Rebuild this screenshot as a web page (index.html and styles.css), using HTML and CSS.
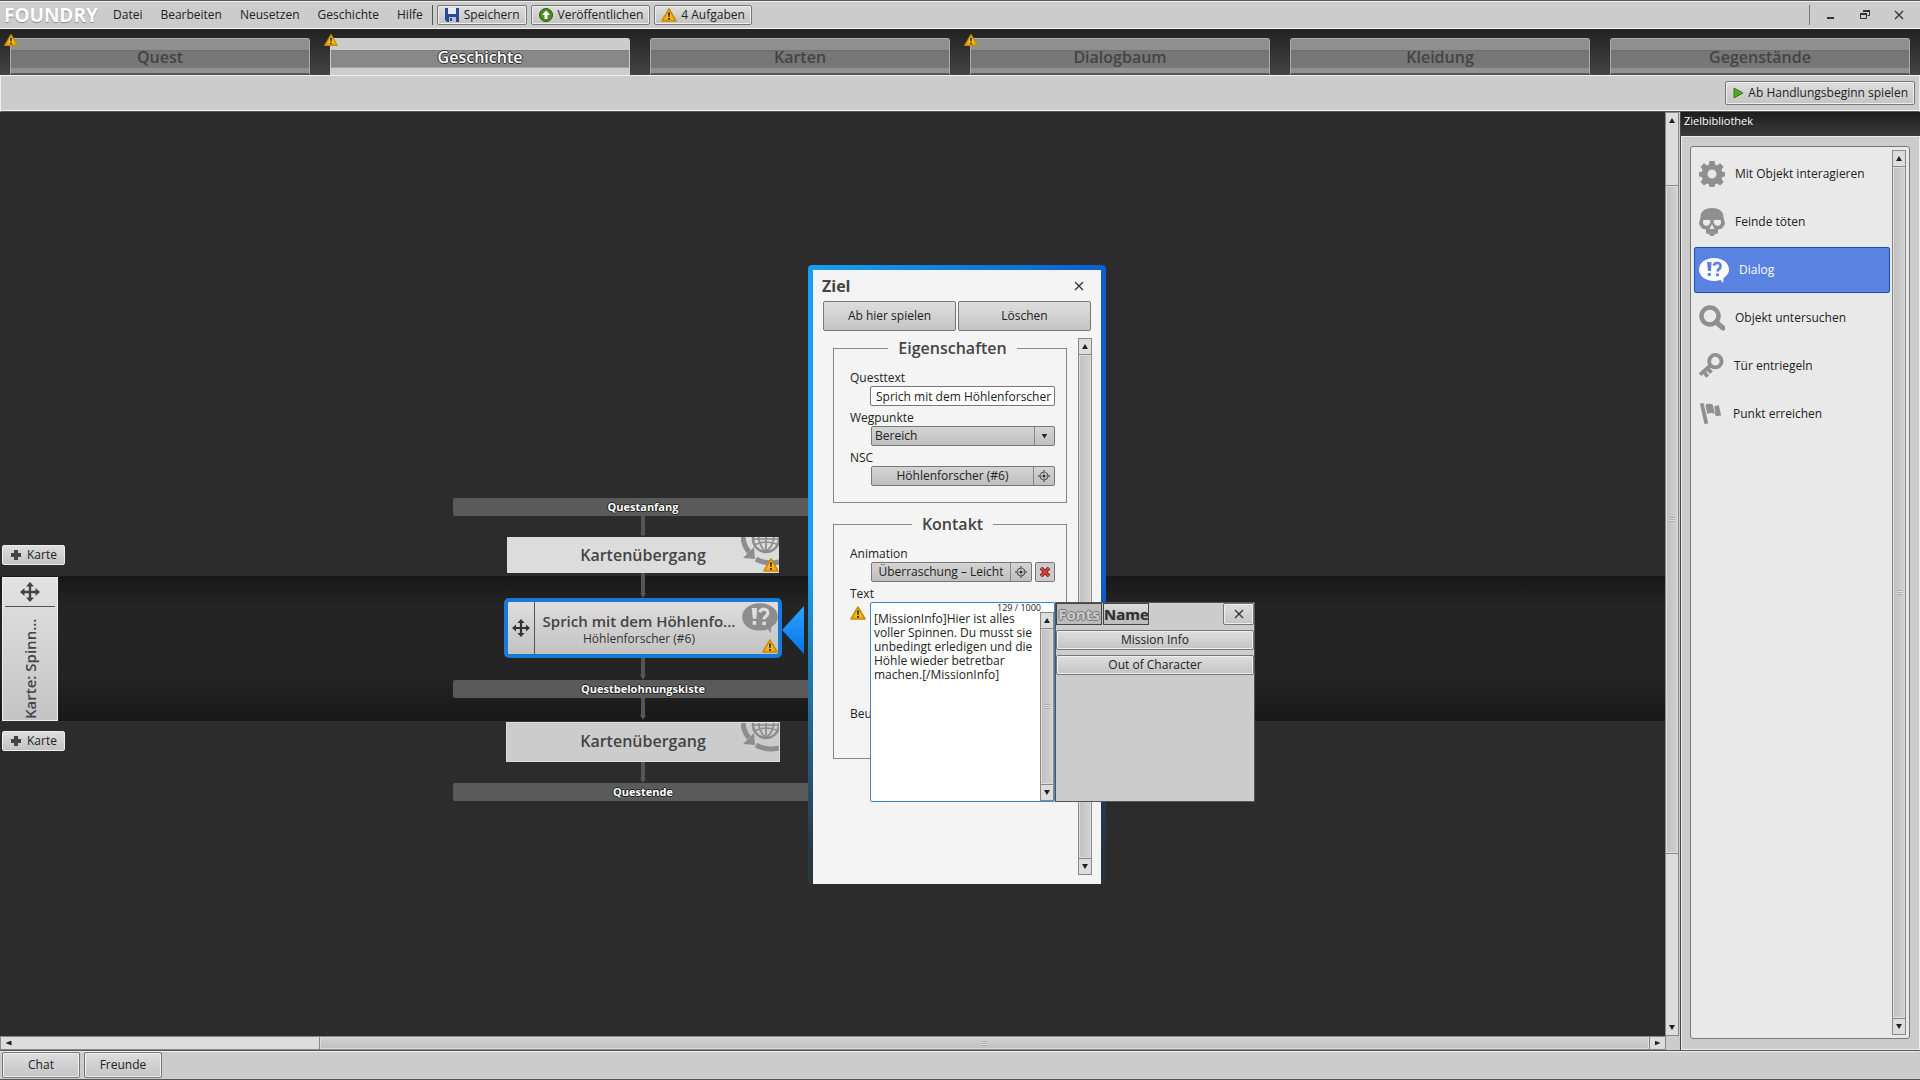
FILE: index.html
```
<!DOCTYPE html>
<html lang="de">
  <head>
    <meta charset="utf-8">
    <meta name="viewport" content="width=device-width,initial-scale=1.0">
    <title>Foundry</title>
    <link rel="stylesheet" href="styles.css">
  </head>
  <body>
    <svg class="sprite" aria-hidden="true">
      <linearGradient id="amber" x1="0" y1="0" x2="0" y2="1">
        <stop offset="0" stop-color="#ffe35a"/>
        <stop offset="1" stop-color="#f5a400"/>
      </linearGradient>
      <symbol id="warn" viewBox="0 0 16 14">
        <path d="M8 1 L15 13 H1 Z" fill="url(#amber)" stroke="#c98a00" stroke-width="1.6" stroke-linejoin="round"/>
        <path d="M7 4.500h2l-.4 4.500h-1.200z M7.100 10h1.800v1.800h-1.800z" fill="#2a1c00"/>
      </symbol>
      <symbol id="move" viewBox="0 0 20 20">
        <path d="M10 0l4 4.500h-2.800v4.300h4.300V6L20 10l-4.500 4v-2.800h-4.300v4.300H14L10 20l-4-4.500h2.800v-4.300H4.500V14L0 10l4.500-4v2.800h4.300V4.500H6z"/>
      </symbol>
      <symbol id="plus" viewBox="0 0 10 10">
        <path d="M3 0h4v3h3v4H7v3H3V7H0V3h3z"/>
      </symbol>
      <symbol id="target" viewBox="0 0 12 12">
        <circle cx="6" cy="6" r="4" fill="none" stroke="#333" stroke-width="1" stroke-dasharray="4.280 2" stroke-dashoffset="-1"/>
        <path d="M6 0v3.500M6 8.500V12M0 6h3.500M8.500 6H12" stroke="#333"/>
        <circle cx="6" cy="6" r="1.500" fill="#333"/>
      </symbol>
      <symbol id="cross" viewBox="0 0 10 10">
        <path d="M1 1l8 8M9 1L1 9" stroke="#333" stroke-width="1.300"/>
      </symbol>
      <symbol id="globe" viewBox="0 0 38 36">
        <g fill="none" stroke="#8d8d8d">
          <circle cx="25" cy="2" r="13" stroke-width="2.500"/>
          <path d="M25-12v27M13 8q12-6 25 0M18-6q-2 12 6 20M32-6q3 12-6 20M12 2h26" stroke-width="1.700"/>
          <path d="M2-2q0 10 6 17" stroke-width="5"/>
          <path d="M15 22q10 6 23 3" stroke-width="5"/>
        </g>
        <path d="M2 21l12 1-1-12z" fill="#8d8d8d"/>
      </symbol>
      <symbol id="dialog" viewBox="0 0 30 26">
        <path d="M15 1C6.500 1 0 6 0 12.500S6.500 24 15 24q3.500 0 6.500-1.200L24 26l.5-5Q30 17.500 30 12.500C30 6 23.500 1 15 1z"/>
        <path d="M8 5h4.500l-.5 9H9zM8.800 16h3v3h-3z" fill="var(--mark)"/>
        <path d="M14.500 8.500q2-3.500 5.200-2.200t1 5.200q-2.200 1.200-2.200 3" fill="none" stroke="var(--mark)" stroke-width="2.600"/>
        <path d="M17 16.500h3v2.700h-3z" fill="var(--mark)"/>
      </symbol>
      <symbol id="gear" viewBox="0 0 26 26">
        <path d="M10.500 0h5l.6 3.600 2 .8 3-2.100 3.500 3.500-2.100 3 .8 1.900 2.700.5v4.200l-2.700.6-.8 2 2.100 3-3.500 3.500-3-2.100-2 .8-.6 2.800h-5l-.6-2.800-1.900-.8-3 2.100L1.500 21l2.100-3-.8-2-2.800-.6v-4.200l2.800-.5.8-1.900-2.100-3L5 2.300l3 2.100 1.900-.8zM13 8.500a4.500 4.500 0 1 0 0 9 4.500 4.500 0 0 0 0-9z" fill-rule="evenodd"/>
      </symbol>
      <symbol id="skull" viewBox="0 0 26 28">
        <path d="M13 0C5 0 1.500 4 1.500 9L0 16l3 4.500 4 1v4l3 .5 1.500 2h3L16 26l3-.5v-4l4-1 3-4.500-1.500-7C24.500 4 21 0 13 0zM4 12.500q4-1.500 7.500 0 0 5-4.500 5.500-3.500-1-3-5.500zm18 0q-4-1.500-7.500 0 0 5 4.500 5.500 3.500-1 3-5.500zM13 16l2.500 5h-5z" fill-rule="evenodd"/>
      </symbol>
      <symbol id="lens" viewBox="0 0 26 26">
        <circle cx="11" cy="11" r="8.500" fill="none" stroke="#8f8f8f" stroke-width="4.500"/>
        <path d="M17 17l7 6" stroke="#8f8f8f" stroke-width="5" stroke-linecap="round"/>
      </symbol>
      <symbol id="key" viewBox="0 0 26 26">
        <circle cx="17" cy="8" r="6.500" fill="none" stroke="#8f8f8f" stroke-width="4"/>
        <path d="M12.500 12L1 22M5 19l4 5M9 16l4 4" fill="none" stroke="#8f8f8f" stroke-width="4"/>
      </symbol>
      <symbol id="flag" viewBox="0 0 26 26">
        <path d="M1 2l4-1 5 22-4 1zM7 3q4-2 8 0l2 10q-4-2-8 0zM16.500 4.500l5-1 2.500 11-6 1z"/>
      </symbol>
    </svg>

    <header class="menubar">
      <h1 class="logo">FOUNDRY</h1>
      <nav class="menu">
        <button>Datei</button>
        <button>Bearbeiten</button>
        <button>Neusetzen</button>
        <button>Geschichte</button>
        <button>Hilfe</button>
      </nav>
      <div class="quick">
        <button class="btn">
          <svg width="16" height="14" viewBox="0 0 16 14"><path d="M1 0h14v14H3l-2-2z" fill="#2b4796"/><path d="M4 0h8v6H4z" fill="#e8ecf5"/><path d="M5 9h7v5H5z" fill="#b9c2dd"/><path d="M6 10h2v3H6z" fill="#2b4796"/></svg>
          Speichern
        </button>
        <button class="btn">
          <svg width="16" height="14" viewBox="0 0 16 14"><circle cx="8" cy="7" r="6.500" fill="#4a8f1c" stroke="#2c5a10"/><path d="M8 2.500l4 4.500H9.500v4h-3V7H4z" fill="#fff"/></svg>
          Veröffentlichen
        </button>
        <button class="btn"><svg width="16" height="14"><use href="#warn"/></svg>4 Aufgaben</button>
      </div>
      <div class="window-buttons">
        <button aria-label="Minimieren"><svg width="10" height="10"><path d="M1 7h7v2H1z" fill="#333"/></svg></button>
        <button aria-label="Wiederherstellen"><svg width="10" height="10"><path d="M3.500 1v-.5h6v5h-2M.5 3.500h6v5h-6z" fill="none" stroke="#333"/><path d="M3 0h7v2H3zM0 3h7v2H0z" fill="#333"/></svg></button>
        <button aria-label="Schließen"><svg width="10" height="10"><use href="#cross"/></svg></button>
      </div>
    </header>

    <nav class="tabs">
      <button class="tab"><svg class="tab-warn"><use href="#warn"/></svg><span>Quest</span></button>
      <button class="tab active"><svg class="tab-warn"><use href="#warn"/></svg><span>Geschichte</span></button>
      <button class="tab"><span>Karten</span></button>
      <button class="tab"><svg class="tab-warn"><use href="#warn"/></svg><span>Dialogbaum</span></button>
      <button class="tab"><span>Kleidung</span></button>
      <button class="tab"><span>Gegenstände</span></button>
    </nav>

    <div class="toolbar">
      <button class="btn play">
        <svg width="12" height="12"><path d="M2 1l9 5-9 5z" fill="#55a81e" stroke="#3c7a12"/></svg>
        Ab Handlungsbeginn spielen
      </button>
    </div>

    <main class="workspace">
      <section class="editor">
        <div class="canvas">
          <div class="lane lane-top">
            <div class="rail"><button class="add"><svg width="10" height="10"><use href="#plus"/></svg>Karte</button></div>
            <div class="chain">
              <div class="bar">Questanfang</div>
              <div class="link"></div>
              <div class="step">
                Kartenübergang
                <svg class="step-icon" width="38" height="36"><use href="#globe"/></svg>
                <svg class="step-warn"><use href="#warn"/></svg>
              </div>
              <div class="stub"></div>
            </div>
          </div>
          <div class="lane lane-map">
            <div class="rail">
              <div class="map-card">
                <div class="map-grip"><svg width="20" height="20"><use href="#move"/></svg></div>
                <div class="map-name">Karte: Spinn...</div>
              </div>
            </div>
            <div class="chain">
              <div class="link"></div>
              <div class="step selected">
                <div class="grip"><svg width="18" height="18"><use href="#move"/></svg></div>
                <div class="step-text">
                  <div>Sprich mit dem Höhlenfo...</div>
                  <small>Höhlenforscher (#6)</small>
                </div>
                <svg class="step-icon" width="36" height="31"><use href="#dialog"/></svg>
                <svg class="step-warn"><use href="#warn"/></svg>
              </div>
              <div class="link"></div>
              <div class="bar">Questbelohnungskiste</div>
              <div class="link"></div>
            </div>
          </div>
          <div class="lane lane-bottom">
            <div class="rail"><button class="add"><svg width="10" height="10"><use href="#plus"/></svg>Karte</button></div>
            <div class="chain">
              <div class="step plain">
                Kartenübergang
                <svg class="step-icon" width="38" height="36"><use href="#globe"/></svg>
              </div>
              <div class="link"></div>
              <div class="bar">Questende</div>
            </div>
          </div>

          <div class="pointer"></div>
          <div class="dialog">
            <div class="dialog-body">
              <div class="dialog-head">
                <h2>Ziel</h2>
                <button aria-label="Schließen"><svg width="10" height="10"><use href="#cross"/></svg></button>
              </div>
              <div class="dialog-actions">
                <button class="btn">Ab hier spielen</button>
                <button class="btn">Löschen</button>
              </div>
              <div class="dialog-scroll">
                <form class="fields">
                  <fieldset>
                    <legend>Eigenschaften</legend>
                    <label for="questtext">Questtext</label>
                    <input id="questtext" type="text" value="Sprich mit dem Höhlenforscher">
                    <label for="wegpunkte">Wegpunkte</label>
                    <div class="select">
                      <select id="wegpunkte"><option>Bereich</option></select>
                      <i class="arrow down"></i>
                    </div>
                    <label for="nsc">NSC</label>
                    <button id="nsc" type="button" class="picker"><span>Höhlenforscher (#6)</span><svg width="12" height="12"><use href="#target"/></svg></button>
                  </fieldset>
                  <fieldset class="contact">
                    <legend>Kontakt</legend>
                    <label for="animation">Animation</label>
                    <div class="pair">
                      <button id="animation" type="button" class="picker"><span>Überraschung – Leicht</span><svg width="12" height="12"><use href="#target"/></svg></button>
                      <button type="button" class="remove" aria-label="Entfernen"><svg width="12" height="12" viewBox="0 0 12 12"><path d="M2 2l8 8M10 2l-8 8" stroke="#6a1412" stroke-width="3.600"/><path d="M2 2l8 8M10 2l-8 8" stroke="#d8433c" stroke-width="2"/></svg></button>
                    </div>
                    <label for="text">Text</label>
                    <div class="text-slot">
                      <svg width="16" height="14"><use href="#warn"/></svg>
                      <div class="text-popup">
                        <div class="text-edit">
                          <div class="counter">129 / 1000</div>
                          <textarea id="text">[MissionInfo]Hier ist alles voller Spinnen. Du musst sie unbedingt erledigen und die Höhle wieder betretbar machen.[/MissionInfo]</textarea>
                          <div class="scroll vertical"><i class="arrow up"></i><div class="thumb"></div><i class="arrow down"></i></div>
                        </div>
                        <div class="fonts">
                          <div class="fonts-head">
                            <button type="button" class="font-tab">Fonts</button>
                            <button type="button" class="font-tab current">Name</button>
                            <button type="button" class="btn fonts-close" aria-label="Schließen"><svg width="10" height="10"><use href="#cross"/></svg></button>
                          </div>
                          <button type="button" class="btn">Mission Info</button>
                          <button type="button" class="btn">Out of Character</button>
                        </div>
                      </div>
                    </div>
                    <div class="label">Beu</div>
                  </fieldset>
                </form>
                <div class="scroll vertical"><i class="arrow up"></i><div class="thumb"></div><i class="arrow down"></i></div>
              </div>
            </div>
          </div>
        </div>
        <div class="scroll vertical canvas-v"><i class="arrow up"></i><div class="track"></div><div class="thumb"></div><div class="track end"></div><i class="arrow down"></i></div>
        <div class="scroll horizontal"><i class="arrow left"></i><div class="track"></div><div class="thumb"></div><i class="arrow right"></i></div>
      </section>

      <aside class="library">
        <h2>Zielbibliothek</h2>
        <div class="library-body">
          <div class="library-box">
            <ul>
              <li><button><svg width="26" height="26"><use href="#gear"/></svg>Mit Objekt interagieren</button></li>
              <li><button><svg width="26" height="28"><use href="#skull"/></svg>Feinde töten</button></li>
              <li><button class="chosen"><svg width="30" height="26"><use href="#dialog"/></svg>Dialog</button></li>
              <li><button><svg width="26" height="26"><use href="#lens"/></svg>Objekt untersuchen</button></li>
              <li><button><svg width="25" height="26"><use href="#key"/></svg>Tür entriegeln</button></li>
              <li><button><svg width="24" height="26"><use href="#flag"/></svg>Punkt erreichen</button></li>
            </ul>
            <div class="scroll vertical"><i class="arrow up"></i><div class="thumb"></div><i class="arrow down"></i></div>
          </div>
        </div>
      </aside>
    </main>

    <footer class="footer">
      <button class="btn">Chat</button>
      <button class="btn">Freunde</button>
    </footer>
  </body>
</html>
```

FILE: styles.css
```
* {
  box-sizing: border-box;
}

body {
  margin: 0;
  height: 100vh;
  display: flex;
  flex-direction: column;
  overflow: hidden;
  background: #2c2c2c;
  color: #222;
  font-family: "Open Sans", "Noto Sans", sans-serif;
  font-size: 12px;
  line-height: 16px;
}

button,
input,
select,
textarea {
  margin: 0;
  padding: 0;
  border: 0;
  background: none;
  color: inherit;
  font: inherit;
}

h1,
h2 {
  margin: 0;
}

svg {
  display: block;
  flex: none;
}

.sprite {
  position: absolute;
  width: 0;
  height: 0;
}

.btn {
  display: flex;
  align-items: center;
  justify-content: center;
  gap: 4px;
  border: 1px solid #777;
  border-radius: 2px;
  box-shadow: inset 0 0 0 1px #eee;
  background: linear-gradient(#dedede, #c4c4c4);
  white-space: nowrap;
}

/* Menu bar */
.menubar {
  display: flex;
  align-items: center;
  height: 30px;
  padding-bottom: 1px;
  border-top: 1px solid #555;
  border-bottom: 1px solid #222;
  box-shadow: inset 0 1px #eee, inset 0 -1px #f5f5f5;
  background: #ccc;
}

.logo {
  width: 95px;
  padding-left: 4px;
  color: #fff;
  font-size: 19px;
  line-height: 26px;
  text-shadow: 0 1px 1px #888;
}

.menu {
  display: flex;
  gap: 18px;
  padding: 0 9px 0 18px;
}

.quick {
  display: flex;
  gap: 4px;
  padding-left: 4px;
  border-left: 1px solid #555;
}

.quick .btn {
  height: 20px;
  padding: 0 6px;
}

.window-buttons {
  display: flex;
  align-items: center;
  gap: 24px;
  height: 20px;
  margin-left: auto;
  padding: 0 16px;
  border-left: 1px solid #777;
}

/* Tabs */
.tabs {
  display: grid;
  grid-template-columns: repeat(6, 1fr);
  gap: 20px;
  height: 45px;
  padding: 8px 10px 0;
  background: linear-gradient(#222, #444);
}

.tab {
  position: relative;
  border: 1px solid #aaa;
  border-bottom: 2px solid #555;
  border-radius: 3px 3px 0 0;
  background: linear-gradient(#8f8f8f 11px, #666 11px, #777 12px, #777 28px, #666 28px, #929292 29px);
  color: #444;
  font-size: 16px;
  font-weight: 600;
  line-height: 20px;
  padding-top: 1px;
}

.tab.active {
  border-color: #ccc;
  background: linear-gradient(#ccc 11px, #777 11px, #888 12px, #888 28px, #777 28px, #ccc 29px);
  color: #fff;
  text-shadow: 1px 0 #333, -1px 0 #333, 0 1px #333, 0 -1px #333;
}

.tab-warn {
  position: absolute;
  top: -6px;
  left: -7px;
  width: 14px;
  height: 14px;
}

.toolbar {
  display: flex;
  align-items: center;
  justify-content: flex-end;
  height: 37px;
  padding: 0 4px 2px 0;
  border: 1px solid #eee;
  border-bottom: 1px solid #555;
  box-shadow: inset 0 -1px #f5f5f5;
  background: #ccc;
}

.play {
  height: 24px;
  padding: 0 6px;
}

/* Workspace */
.workspace {
  flex: 1;
  display: flex;
  min-height: 0;
}

.editor {
  flex: 1;
  display: grid;
  grid-template-columns: 1fr 15px;
  grid-template-rows: 1fr 14px;
  min-width: 0;
  background: #ccc;
}

.canvas {
  position: relative;
  display: flex;
  flex-direction: column;
  min-height: 0;
  padding-top: 150px;
  background: #2c2c2c;
}

.lane {
  display: flex;
}

.lane-top,
.lane-bottom {
  flex: 1;
}

.lane-top {
  align-items: flex-end;
}

.lane-map {
  border-bottom: 1px solid #333;
  background: linear-gradient(#181818, #242424 30px, #242424 100px, #181818);
}

.rail {
  width: 453px;
  padding-left: 2px;
}

.add {
  display: flex;
  align-items: center;
  gap: 6px;
  width: 63px;
  height: 20px;
  padding-left: 8px;
  border: 1px solid #eee;
  border-radius: 2px;
  background: linear-gradient(#ddd, #c2c2c2);
}

.add svg {
  fill: #444;
}

.lane-top .add {
  margin-bottom: 11px;
}

.lane-bottom .add {
  margin-top: 9px;
}

.map-card {
  width: 56px;
  height: 144px;
  margin-top: 1px;
  padding: 0 2px;
  border: 1px solid #eee;
  background: linear-gradient(#e2e2e2, #c4c4c4);
}

.map-grip {
  display: flex;
  align-items: center;
  justify-content: center;
  height: 29px;
  border-bottom: 1px solid #555;
  fill: #444;
}

.map-name {
  width: 50px;
  height: 112px;
  writing-mode: vertical-rl;
  transform: rotate(180deg);
  color: #444;
  font-size: 15px;
  font-weight: 600;
  line-height: 50px;
}

.chain {
  display: flex;
  flex-direction: column;
  align-items: center;
  width: 380px;
}

.bar {
  width: 100%;
  height: 18px;
  border-radius: 2px;
  background: #5a5a5a;
  color: #fff;
  font-size: 11px;
  font-weight: 700;
  line-height: 18px;
  text-align: center;
  text-shadow: 1px 0 #222, -1px 0 #222, 0 1px #222, 0 -1px #222;
}

.link {
  width: 6px;
  height: 21px;
  background: #555;
  clip-path: polygon(1px 0, 5px 0, 5px 17px, 100% 17px, 50% 100%, 0 17px, 1px 17px);
}

.lane-map .link {
  height: 22px;
}

.stub {
  width: 4px;
  height: 3px;
  background: #555;
}

.step {
  position: relative;
  width: 272px;
  height: 36px;
  overflow: hidden;
  background: #dcdcdc;
  color: #444;
  font-size: 16px;
  font-weight: 600;
  line-height: 36px;
  text-align: center;
}

.step.plain {
  width: 274px;
  height: 40px;
  border: 1px solid #ddd;
  background: #ccc;
}

.step.selected {
  display: flex;
  width: 278px;
  height: 60px;
  border: 4px solid #1a78d8;
  border-radius: 5px;
  background: linear-gradient(#dedede, #c2c2c2);
  line-height: 20px;
}

.grip {
  display: flex;
  align-items: center;
  justify-content: center;
  width: 27px;
  border-right: 1px solid #555;
  fill: #333;
}

.step-text {
  width: 208px;
  padding-top: 9px;
  font-size: 15px;
  white-space: nowrap;
}

.step-text small {
  display: block;
  color: #333;
  font-size: 12px;
  font-weight: 400;
  line-height: 16px;
}

.step-icon {
  --mark: #ddd;
  position: absolute;
  top: 0;
  right: 0;
  fill: #8d8d8d;
}

.step-warn {
  position: absolute;
  right: 0;
  bottom: 1px;
  width: 16px;
  height: 14px;
}

/* Goal dialog */
.pointer {
  position: absolute;
  top: 494px;
  left: 782px;
  width: 22px;
  height: 48px;
  background: linear-gradient(#2aa4ff, #0a74e8);
  clip-path: polygon(0 50%, 100% 0, 100% 100%);
}

.dialog {
  position: absolute;
  top: 153px;
  left: 808px;
  width: 298px;
  padding: 5px 5px 0;
  border-radius: 4px 4px 0 0;
  background: linear-gradient(transparent 50%, rgba(44, 44, 44, 0.9) 95%), linear-gradient(90deg, #189ff0, #0a5fd0);
}

.dialog-body {
  height: 614px;
  background: #f4f4f4;
}

.dialog-head {
  display: flex;
  align-items: center;
  justify-content: space-between;
  height: 31px;
  padding: 0 17px 0 9px;
}

.dialog-head h2,
legend {
  color: #444;
  font-size: 16px;
  font-weight: 600;
  line-height: 20px;
}

.dialog-head h2 {
  font-weight: 700;
}

.dialog-actions {
  display: grid;
  grid-template-columns: 1fr 1fr;
  gap: 2px;
  padding: 0 10px;
}

.dialog-actions .btn {
  height: 30px;
  box-shadow: none;
}

.dialog-scroll {
  display: flex;
  height: 537px;
  margin: 7px 9px 0 20px;
}

.fields {
  flex: 1;
  margin-right: 11px;
}

fieldset {
  height: 165px;
  margin: 0 0 11px;
  padding: 8px 11px 0 16px;
  border: 1px solid #888;
}

.contact {
  height: 245px;
}

legend {
  margin: 0 auto;
  padding: 0 10px;
}

fieldset label,
.label {
  display: block;
  height: 20px;
  line-height: 24px;
}

fieldset input,
.select,
.picker {
  display: flex;
  width: 184px;
  height: 20px;
  margin-left: 21px;
  border: 1px solid #777;
  border-radius: 2px;
  background: linear-gradient(#d4d4d4, #bfbfbf);
}

fieldset input {
  width: 185px;
  margin-left: 20px;
  padding: 0 1px 0 5px;
  background: #fff;
}

.select {
  position: relative;
}

.select select {
  flex: 1;
  padding-left: 3px;
  appearance: none;
}

.select .arrow {
  position: absolute;
  top: 0;
  right: 0;
  width: 20px;
  height: 18px;
  border-left: 1px solid #888;
  pointer-events: none;
}

.picker {
  align-items: center;
}

.picker span {
  flex: 1;
  border-right: 1px solid #888;
  line-height: 18px;
  white-space: nowrap;
}

.picker svg {
  margin: 0 4px;
}

.pair {
  display: flex;
  gap: 3px;
}

.pair .picker {
  width: 161px;
}

.remove {
  display: flex;
  align-items: center;
  justify-content: center;
  width: 20px;
  height: 20px;
  border: 1px solid #777;
  border-radius: 2px;
  background: #ccc;
}

.text-slot {
  position: relative;
  height: 100px;
  padding-top: 4px;
}

.text-popup {
  position: absolute;
  top: 0;
  left: 20px;
  display: flex;
  width: 385px;
  height: 200px;
}

.text-edit {
  display: grid;
  grid-template-columns: 1fr 14px;
  grid-template-rows: 9px 1fr;
  width: 185px;
  border: 1px solid #3f86c4;
  border-radius: 2px;
  background: #fff;
}

.counter {
  grid-column: 1 / span 2;
  padding-right: 13px;
  font-size: 9px;
  line-height: 9px;
  text-align: right;
}

textarea {
  padding: 0 0 0 3px;
  line-height: 14px;
  resize: none;
  outline: none;
}

.fonts {
  flex: 1;
  display: flex;
  flex-direction: column;
  gap: 5px;
  border: 1px solid #555;
  background: #ccc;
}

.fonts .btn {
  height: 20px;
}

.fonts-head {
  display: flex;
  gap: 1px;
  height: 22px;
}

.font-tab {
  width: 46px;
  border: 1px solid #444;
  background: #bbb;
  color: #ccc;
  font-size: 15px;
  font-weight: 700;
  line-height: 20px;
  text-shadow: 1px 0 #777, -1px 0 #777, 0 1px #777, 0 -1px #777;
}

.font-tab.current {
  background: linear-gradient(#ddd, #bbb);
  color: #333;
  text-shadow: 0 0 1px #777;
}

.fonts .fonts-close {
  width: 31px;
  height: 22px;
  margin-left: auto;
}

/* Scrollbars */
.scroll {
  display: flex;
  border: 1px solid #888;
  background: #ddd;
}

.vertical {
  flex-direction: column;
  width: 14px;
}

.arrow {
  display: flex;
  align-items: center;
  justify-content: center;
  flex: none;
  width: 12px;
  height: 15px;
}

.arrow::before {
  content: "";
  width: 6px;
  height: 5px;
  background: #222;
}

.up::before {
  clip-path: polygon(50% 0, 100% 100%, 0 100%);
}

.down::before {
  clip-path: polygon(0 0, 100% 0, 50% 100%);
}

.left::before {
  clip-path: polygon(0 50%, 100% 0, 100% 100%);
}

.right::before {
  clip-path: polygon(0 0, 100% 50%, 0 100%);
}

.thumb {
  flex: 1;
  display: flex;
  align-items: center;
  justify-content: center;
  border: 1px solid #888;
  border-width: 1px 0;
  box-shadow: inset 0 0 0 1px #ddd;
  background: linear-gradient(90deg, #c0c0c0, #d2d2d2);
}

.thumb::before {
  content: "";
  width: 5px;
  height: 5px;
  background: repeating-linear-gradient(#aaa 0 1px, #e2e2e2 1px 2px);
}

.canvas-v .track {
  flex: 0 0 57px;
}

.canvas-v .end {
  flex-basis: 166px;
}

.horizontal {
  width: calc(100% + 1px);
}

.horizontal .arrow {
  width: 15px;
  height: 12px;
}

.horizontal .track {
  width: 303px;
}

.horizontal .thumb {
  border-width: 0 1px;
  background: linear-gradient(#d2d2d2, #c0c0c0);
}

/* Goal library */
.library {
  display: flex;
  flex-direction: column;
  width: 240px;
  border-left: 1px solid #444;
}

.library h2 {
  height: 24px;
  padding-left: 3px;
  background: linear-gradient(#1c1c1c, #3c3c3c);
  color: #fff;
  font-size: 11px;
  font-weight: 400;
  line-height: 17px;
}

.library-body {
  flex: 1;
  display: flex;
  padding: 9px 9px 10px 8px;
  border: 1px solid #eee;
  background: #ccc;
}

.library-box {
  flex: 1;
  display: flex;
  justify-content: space-between;
  padding: 3px;
  border: 1px solid #777;
  border-radius: 3px;
  background: #e9e9e9;
}

.library ul {
  width: 196px;
  margin: 0;
  padding: 1px 0 0;
  list-style: none;
}

.library li {
  height: 48px;
}

.library li button {
  display: flex;
  align-items: center;
  gap: 10px;
  width: 100%;
  height: 46px;
  padding-left: 4px;
  border: 1px solid transparent;
  border-radius: 2px;
  fill: #8f8f8f;
}

.library li .chosen {
  --mark: #5a82e0;
  border-color: #1a4fb0;
  background: #5a82e0;
  color: #fff;
  fill: #fff;
}

/* Footer */
.footer {
  display: flex;
  gap: 4px;
  height: 30px;
  padding: 1px 2px;
  border-top: 1px solid #555;
  border-bottom: 1px solid #555;
  box-shadow: inset 0 1px #eee;
  background: #ccc;
}

.footer .btn {
  width: 78px;
  height: 26px;
}
```
